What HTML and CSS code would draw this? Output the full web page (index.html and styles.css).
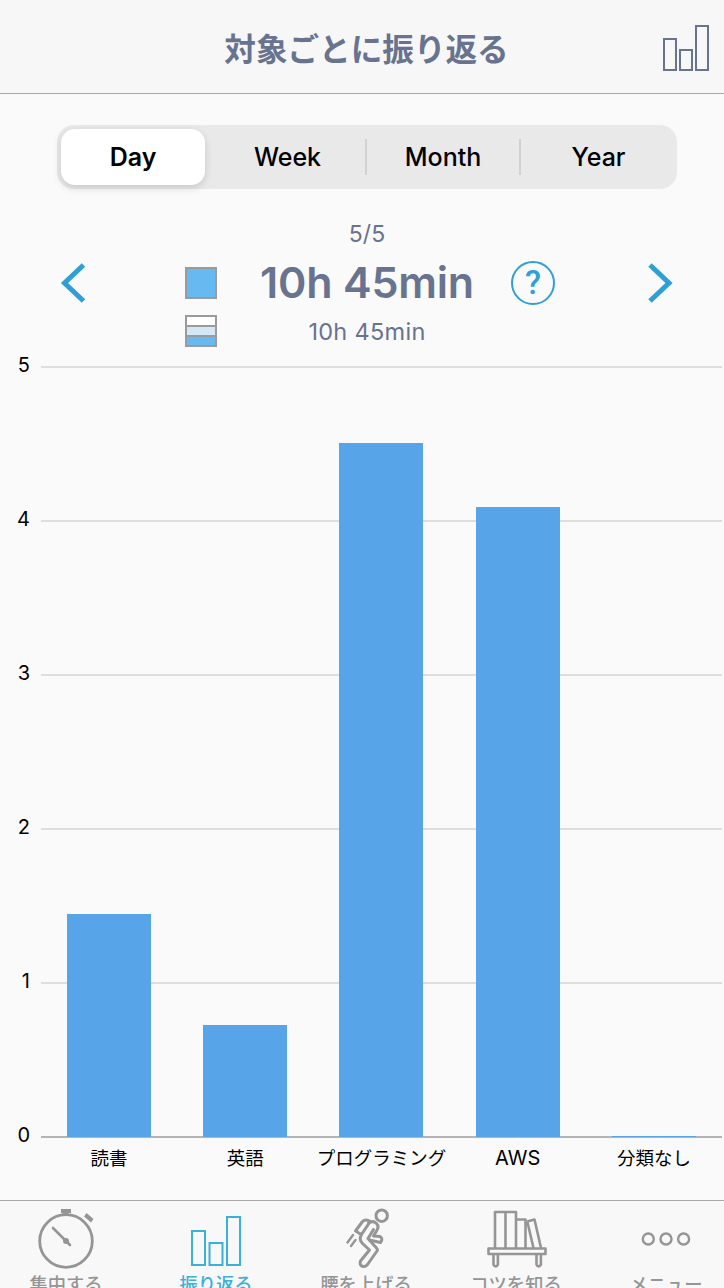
FILE: index.html
```
<!DOCTYPE html>
<html lang="ja">
<head>
    <meta charset="UTF-8">
    <meta name="viewport" content="width=device-width, initial-scale=1.0">
    <title>対象ごとに振り返る</title>
    <link rel="stylesheet" href="styles.css">
</head>
<body>
    <header class="header">
        <h1>対象ごとに振り返る</h1>
        <svg class="header-icon" width="48" height="48" viewBox="0 0 48 48">
            <path d="M2 14h12v31H2zM18 25h12v20H18zM34 1h12v44H34z"/>
        </svg>
    </header>

    <main>
        <div class="segments">
            <button class="segment active">Day</button>
            <button class="segment">Week</button>
            <button class="segment divided">Month</button>
            <button class="segment divided">Year</button>
        </div>

        <section class="summary">
            <button class="arrow">
                <svg width="26" height="40" viewBox="0 0 26 40"><path d="M23.500 2L4.500 20l19 18"/></svg>
            </button>
            <div class="legend">
                <span class="swatch"></span>
                <span class="swatch stacked"><i></i><i></i><i></i></span>
            </div>
            <div class="totals">
                <div class="date">5/5</div>
                <div class="total">10h 45min</div>
                <div class="subtotal">10h 45min</div>
            </div>
            <button class="help">?</button>
            <button class="arrow">
                <svg width="26" height="40" viewBox="0 0 26 40"><path d="M3 2l19 18L3 38"/></svg>
            </button>
        </section>

        <section class="chart">
            <div class="y-axis">
                <span>5</span><span>4</span><span>3</span><span>2</span><span>1</span><span>0</span>
            </div>
            <div class="plot">
                <div class="lines">
                    <span></span><span></span><span></span><span></span><span></span><span></span>
                </div>
                <div class="bars">
                    <div class="bar" style="height: 28.9%"></div>
                    <div class="bar" style="height: 14.55%"></div>
                    <div class="bar" style="height: 90%"></div>
                    <div class="bar" style="height: 81.7%"></div>
                    <div class="bar" style="height: 0.15%"></div>
                </div>
            </div>
            <div class="x-axis">
                <span>読書</span><span>英語</span><span>プログラミング</span><span class="latin">AWS</span><span>分類なし</span>
            </div>
        </section>
    </main>

    <nav class="tabs">
        <a class="tab">
            <svg width="64" height="64" viewBox="0 0 64 64">
                <circle cx="32" cy="34" r="26.3" stroke-width="2.8"/>
                <path d="M19 21l17 17" stroke-width="2.6" stroke-linecap="round"/>
                <circle class="fill" cx="32" cy="34" r="3"/>
                <path class="fill" d="M27 2h10v4h-2.500v2h-6V6H27zM52.500 6l7 6-2.500 3.500-7-6z"/>
            </svg>
            <span>集中する</span>
        </a>
        <a class="tab active">
            <svg width="64" height="64" viewBox="0 0 64 64">
                <path d="M8 24h13v34H8zM25.500 36h13v22h-13zM43 10h13v48H43z" stroke-width="2"/>
            </svg>
            <span>振り返る</span>
        </a>
        <a class="tab">
            <svg width="64" height="64" viewBox="0 0 64 64">
                <g stroke-width="3" stroke-linecap="round" stroke-linejoin="round">
                    <circle cx="47.700" cy="8.700" r="5.700"/>
                    <path d="M26.500 27L21.500 24 28.500 14.500Q31.500 11.500 36.500 14.500"/>
                    <path d="M34.500 16Q39 13 42.500 16.500 45.500 19.500 42.500 24L39.500 29 46 29.500Q49.500 32 46.500 35.500L35.500 33"/>
                    <path d="M35.500 15.500L27.500 27.500Q24.500 32.500 28.500 36.500L35.500 43 26.500 54Q25 58.500 29 59.500 31.500 60 33.500 57.500L43 44Q44 42.500 42.500 41L34 31.500 39.500 22.500"/>
                    <path d="M19 28L13.500 35.500M21.500 33L17 39" stroke-width="2.4"/>
                </g>
            </svg>
            <span>腰を上げる</span>
        </a>
        <a class="tab">
            <svg width="64" height="64" viewBox="0 0 64 64">
                <g stroke-width="2.6" stroke-linejoin="round">
                    <path d="M11 41V5h21v36M21.500 5v36M32 12.500h9.500V41M43.300 14.500l7.200-2L57 41M43.300 14.500L49.500 41"/>
                    <path d="M4.500 41.500h57v5.500h-57z"/>
                    <path d="M9.500 47v10.500q2.200 4 4.400 0V47M52.500 47v10.500q2.200 4 4.400 0V47"/>
                </g>
            </svg>
            <span>コツを知る</span>
        </a>
        <a class="tab">
            <svg width="64" height="64" viewBox="0 0 64 64">
                <g stroke-width="2.400">
                    <circle cx="14.300" cy="32" r="5.500"/>
                    <circle cx="32" cy="32" r="5.500"/>
                    <circle cx="49.600" cy="32" r="5.500"/>
                </g>
            </svg>
            <span>メニュー</span>
        </a>
    </nav>
</body>
</html>
```
FILE: styles.css
```
* { box-sizing: border-box; }
body {
    margin: 0;
    width: 724px;
    height: 1288px;
    overflow: hidden;
    display: flex;
    flex-direction: column;
    background: #fafafa;
    font-family: Inter, "Noto Sans CJK JP", sans-serif;
    color: #000;
}
button { padding: 0; border: none; background: none; font-family: inherit; color: inherit; }
svg { display: block; fill: none; stroke: currentColor; }

.header {
    flex: none;
    height: 94px;
    display: grid;
    grid-template-columns: 62px 1fr 62px;
    align-items: center;
    background: #f7f7f7;
    border-bottom: 1px solid #a9a9a9;
    color: #68738f;
}
.header h1 {
    grid-column: 2;
    margin: 0;
    padding: 7px 0 0 9px;
    text-align: center;
    font-size: 31.6px;
    line-height: 46px;
    font-weight: 600;
}
.header-icon { stroke-width: 2; margin-top: 5px; }

main { flex: none; height: 1106px; padding-top: 31px; }

.segments {
    display: grid;
    grid-template-columns: 149px 155px 154px 154px;
    width: 620px;
    height: 64px;
    margin-left: 57px;
    padding: 4px;
    background: #e9e9ea;
    border-radius: 17px;
}
.segment { font-size: 25px; font-weight: 500; }
.segment.active {
    width: 144px;
    font-weight: 600;
    background: #fff;
    border-radius: 14px;
    box-shadow: 0 3px 8px rgba(0,0,0,0.14);
}
.segment.divided { height: 36px; align-self: center; border-left: 2px solid #d2d2d4; }
.segment.divided:last-child { padding-left: 3px; }

.summary {
    display: grid;
    grid-template-columns: 26px 175px 212px 174px 26px;
    height: 177px;
    padding: 31px 0 0 60px;
    color: #68738f;
}
.arrow { height: 40px; margin-top: 43px; color: #2f9fd6; stroke-width: 5; }
.legend { display: flex; flex-direction: column; gap: 16px; margin: 47px 0 0 99px; }
.swatch { width: 32px; height: 32px; background: #67b9f1; border: 2px solid #9b9b9b; }
.stacked { display: grid; grid-template-rows: 8px 10px 10px; }
.stacked i { background: #fff; }
.stacked i + i { background: #d2e8f7; border-top: 2px solid #9b9b9b; }
.stacked i:last-child { background: #67b9f1; }
.totals { text-align: center; white-space: nowrap; margin: 0 -20px; }
.date { font-size: 23px; line-height: 28px; }
.total { font-size: 43px; line-height: 68px; padding-bottom: 2px; font-weight: 600; letter-spacing: -0.2px; }
.subtotal { font-size: 23.5px; line-height: 28px; letter-spacing: 0.3px; }
.help {
    width: 44px;
    height: 44px;
    margin: 41px 0 0 38px;
    border: 2px solid #2f9fd6;
    border-radius: 50%;
    color: #2f9fd6;
    font-family: Roboto, sans-serif;
    font-size: 33px;
    line-height: 40px;
    font-weight: 500;
}

.chart {
    display: grid;
    grid-template-columns: 41px 681px;
    grid-template-rows: 772px 40px;
}
.y-axis {
    display: flex;
    flex-direction: column;
    justify-content: space-between;
    margin: -14px 0 -10px;
    padding-right: 11px;
    text-align: right;
    font-size: 20px;
    line-height: 26px;
}
.plot { display: grid; }
.lines, .bars { grid-area: 1 / 1; display: flex; }
.lines { flex-direction: column; justify-content: space-between; }
.lines span { height: 2px; background: #dedede; }
.lines span:last-child { background: #b4b4b4; }
.bars { align-items: flex-end; justify-content: space-around; height: 771px; }
.bar { width: 84px; min-height: 1px; background: #58a4e8; }
.x-axis {
    grid-column: 2;
    display: grid;
    grid-template-columns: repeat(5, 1fr);
    padding-top: 6px;
    text-align: center;
    white-space: nowrap;
    font-size: 18.5px;
    line-height: 28px;
}
.x-axis .latin { font-size: 20px; }

.tabs {
    flex: none;
    display: grid;
    grid-template-columns: repeat(5, 150px);
    height: 88px;
    overflow: hidden;
    padding-top: 6px;
    margin: 0 -17px 0 -9px;
    background: #f8f8f8;
    border-top: 1px solid #a9a9a9;
}
.tab {
    display: flex;
    flex-direction: column;
    align-items: center;
    color: #959595;
    font-size: 18.3px;
    line-height: 26px;
    font-weight: 500;
}
.tab.active { color: #3bb0d9; }
.tab .fill { fill: currentColor; stroke: none; }
```
